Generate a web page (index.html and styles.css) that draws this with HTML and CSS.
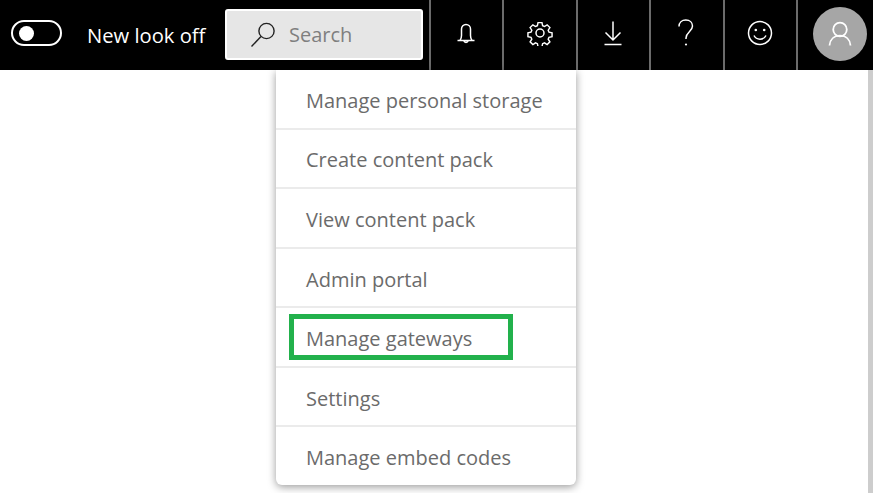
FILE: index.html
```html
<!DOCTYPE html>
<html lang="en">
<head>
<meta charset="utf-8">
<title>Settings menu</title>
<link rel="stylesheet" href="styles.css">
</head>
<body>
<header class="topbar">
  <div class="toggle"><span class="knob"></span></div>
  <span class="look">New look off</span>
  <div class="search">
    <svg class="search-icon" viewBox="0 0 26 26" width="26" height="26"><circle cx="16.5" cy="9" r="7.6" fill="none" stroke="#222" stroke-width="1.4"/><path d="M11 14.5 1.5 24.5" fill="none" stroke="#222" stroke-width="1.4"/></svg>
    <span class="search-text">Search</span>
  </div>
  <nav class="icons">
    <div class="cell"><svg viewBox="0 0 24 26" width="24" height="26"><path d="M3.5 20.5h17M6 20.5c1-1.5 1.500-3 1.500-5V9a4.500 4.500 0 0 1 9 0v6.500c0 2 .5 3.500 1.500 5M9.800 20.800a2.300 2.300 0 0 0 4.400 0" fill="none" stroke="#fff" stroke-width="1.500"/></svg></div>
    <div class="cell"><svg viewBox="0 0 26 26" width="26" height="26"><path d="M10.800 1.500h4.400l.7 3.400 2.100.9 2.900-1.900 3.100 3.100-1.900 2.900.9 2.100 3.400.7v4.400l-3.400.7-.9 2.100 1.900 2.900-3.100 3.100-2.900-1.900-2.100.9-.7 3.400h-4.400l-.7-3.400-2.100-.9-2.900 1.900-3.100-3.100 1.900-2.900-.9-2.100-3.400-.7v-4.400l3.400-.7.9-2.100-1.900-2.900 3.100-3.100 2.900 1.900 2.100-.9z" transform="translate(1.300 1.300) scale(.9)" fill="none" stroke="#fff" stroke-width="1.600"/><circle cx="13" cy="13" r="4" fill="none" stroke="#fff" stroke-width="1.500"/></svg></div>
    <div class="cell"><svg viewBox="0 0 24 26" width="24" height="26"><path d="M12 1.500v18M4.500 12.500l7.500 7.500 7.500-7.500M3.500 24.500h17" fill="none" stroke="#fff" stroke-width="1.500"/></svg></div>
    <div class="cell"><svg viewBox="0 0 24 28" width="24" height="28"><path d="M5 7.500C5 3.500 8 1 11.800 1c4 0 6.700 2.500 6.700 6 0 5.500-6.500 6-6.500 12v1" fill="none" stroke="#fff" stroke-width="1.500"/><circle cx="12" cy="25.500" r="1.100" fill="#fff"/></svg></div>
    <div class="cell"><svg viewBox="0 0 26 26" width="26" height="26"><circle cx="13" cy="13" r="11.500" fill="none" stroke="#fff" stroke-width="1.500"/><circle cx="8.800" cy="10" r="1.300" fill="#fff"/><circle cx="17.200" cy="10" r="1.300" fill="#fff"/><path d="M7 15.500c1.200 2.500 3.300 3.700 6 3.700s4.800-1.200 6-3.700" fill="none" stroke="#fff" stroke-width="1.500"/></svg></div>
    <div class="cell cell-avatar"><div class="avatar"><svg viewBox="0 0 26 26" width="26" height="26"><circle cx="13" cy="8.500" r="6.800" fill="none" stroke="#fff" stroke-width="1.800"/><path d="M2.500 24.500c.5-6 4.500-9.800 10.500-9.800s10 3.800 10.500 9.800" fill="none" stroke="#fff" stroke-width="1.800"/></svg></div></div>
  </nav>
</header>
<main class="content">
  <ul class="menu">
    <li class="item">Manage personal storage</li>
    <li class="item">Create content pack</li>
    <li class="item">View content pack</li>
    <li class="item">Admin portal</li>
    <li class="item">Manage gateways<span class="highlight"></span></li>
    <li class="item">Settings</li>
    <li class="item">Manage embed codes</li>
  </ul>
  <div class="scrollbar"></div>
</main>
</body>
</html>
```
FILE: styles.css
```css
* { box-sizing: border-box; }
html, body { margin: 0; height: 100%; overflow: hidden; background: #fff; }
body { font-family: "Open Sans", "Noto Sans", sans-serif; }
.topbar {
  height: 70px;
  background: #000;
  display: flex;
  align-items: center;
  padding-left: 11px;
}
.toggle {
  width: 51px;
  height: 26px;
  border: 2px solid #fff;
  border-radius: 13px;
  display: flex;
  align-items: center;
  padding-left: 6px;
  margin: 0 25px 4px 0;
}
.knob { width: 15px; height: 15px; background: #fff; border-radius: 50%; }
.look { color: #fff; font-size: 20.2px; width: 138px; white-space: nowrap; }
.search {
  width: 198px;
  height: 51px;
  background: #e6e6e6;
  border: 2px solid #fff;
  border-radius: 3px;
  display: flex;
  align-items: center;
  padding-left: 23px;
  margin: 0 6px 1px 0;
}
.search-icon { margin-right: 13px; }
.search-text { color: #7f7f7f; font-size: 20px; }
.icons { display: flex; height: 70px; flex: 1; }
.cell {
  width: 73.4px;
  height: 70px;
  border-left: 2px solid #6b6b6b;
  display: flex;
  align-items: center;
  justify-content: center;
  padding: 0 1px 4px 0;
}
.cell-avatar { flex: 1; justify-content: flex-start; padding: 0 0 2px 15px; }
.avatar {
  width: 54px;
  height: 54px;
  border-radius: 50%;
  background: #a6a6a6;
  display: flex;
  align-items: center;
  justify-content: center;
}
.content { position: relative; height: 423px; display: flex; padding-left: 276px; }
.menu {
  list-style: none;
  margin: 0;
  padding: 0;
  width: 300px;
  height: 415px;
  background: #fff;
  border-radius: 0 0 6px 6px;
  box-shadow: 0 2px 8px rgba(0, 0, 0, .4);
  display: flex;
  flex-direction: column;
}
.item {
  position: relative;
  flex: 1;
  display: flex;
  align-items: center;
  padding: 3px 0 0 30px;
  color: #6b6b6b;
  font-size: 20px;
  border-bottom: 2px solid #ebebeb;
}
.item:last-child { border-bottom: 0; }
.highlight {
  position: absolute;
  left: 13px;
  right: 63px;
  top: 6px;
  bottom: 6px;
  border: 5px solid #22b14c;
}
.scrollbar { position: absolute; top: 0; right: 0; width: 5px; height: 100%; background: #cdcdcd; }
```
